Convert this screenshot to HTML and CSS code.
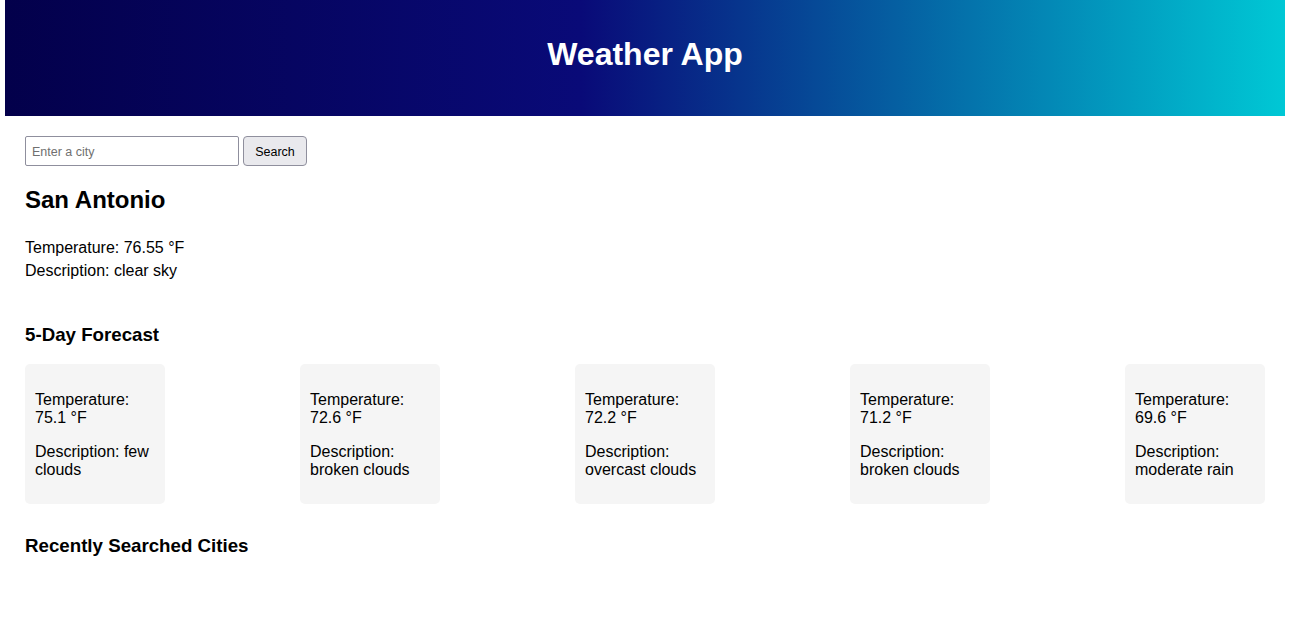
FILE: index.html
```html
<!DOCTYPE html>
<html lang="en">
<head>
<meta charset="utf-8">
<title>Weather App</title>
<link rel="stylesheet" href="styles.css">
</head>
<body>
<div class="app">
  <header class="header">
    <h1 class="title">Weather App</h1>
  </header>
  <main class="main">
    <div class="search">
      <input class="search-input" type="text" placeholder="Enter a city">
      <button class="search-btn" type="button">Search</button>
    </div>
    <section class="current">
      <h2 class="city">San Antonio</h2>
      <p class="info">Temperature: 76.55 °F</p>
      <p class="info">Description: clear sky</p>
    </section>
    <section class="forecast">
      <h3 class="section-title">5-Day Forecast</h3>
      <div class="cards">
        <div class="card"><p>Temperature: 75.1 °F</p><p>Description: few clouds</p></div>
        <div class="card"><p>Temperature: 72.6 °F</p><p>Description: broken clouds</p></div>
        <div class="card"><p>Temperature: 72.2 °F</p><p>Description: overcast clouds</p></div>
        <div class="card"><p>Temperature: 71.2 °F</p><p>Description: broken clouds</p></div>
        <div class="card"><p>Temperature: 69.6 °F</p><p>Description: moderate rain</p></div>
      </div>
    </section>
    <section class="recent">
      <h3 class="section-title">Recently Searched Cities</h3>
    </section>
  </main>
</div>
</body>
</html>
```
FILE: styles.css
```css
html, body {
  margin: 0;
  padding: 0;
  background: #ffffff;
}
body {
  font-family: "Liberation Sans", Arial, sans-serif;
  color: #000;
}
.app {
  width: 1280px;
  margin-left: 5px;
}
.header {
  background: linear-gradient(90deg, #03004b 0%, #090a78 45%, #00c8d5 100%);
  padding: 36px 0 43px;
  text-align: center;
}
.title {
  margin: 0;
  color: #ffffff;
  font-size: 32px;
  line-height: 37px;
  font-weight: bold;
}
.main {
  padding: 20px;
}
.search {
  display: flex;
  align-items: center;
  gap: 4px;
}
.search-input {
  box-sizing: border-box;
  width: 214px;
  height: 30px;
  padding: 1px 6px 0;
  border: 1px solid #8f8f9d;
  border-radius: 2px;
  font-family: "Liberation Sans", Arial, sans-serif;
  font-size: 12.5px;
  color: #000;
  background: #fff;
  outline: none;
}
.search-input::placeholder {
  color: #707070;
}
.search-btn {
  box-sizing: border-box;
  width: 64px;
  height: 30px;
  padding: 1px 0 0;
  border: 1px solid #8f8f9d;
  border-radius: 4px;
  background: #e9e9ed;
  font-family: "Liberation Sans", Arial, sans-serif;
  font-size: 12.5px;
  color: #000;
}
.city {
  margin: 20px 0 24px;
  font-size: 24px;
  line-height: 27px;
  font-weight: bold;
}
.info {
  margin: 0;
  font-size: 16px;
  line-height: 22.5px;
}
.forecast {
  margin-top: 42px;
}
.section-title {
  margin: 0 0 18.5px;
  font-size: 18.72px;
  line-height: 21.5px;
  font-weight: bold;
}
.cards {
  display: flex;
  justify-content: space-between;
}
.card {
  box-sizing: border-box;
  width: 140px;
  padding: 11px 10px 9px;
  background: #f5f5f5;
  border-radius: 5px;
  font-size: 16px;
}
.card p {
  margin: 16px 0;
  line-height: 18px;
}
.recent {
  margin-top: 31px;
}
```
